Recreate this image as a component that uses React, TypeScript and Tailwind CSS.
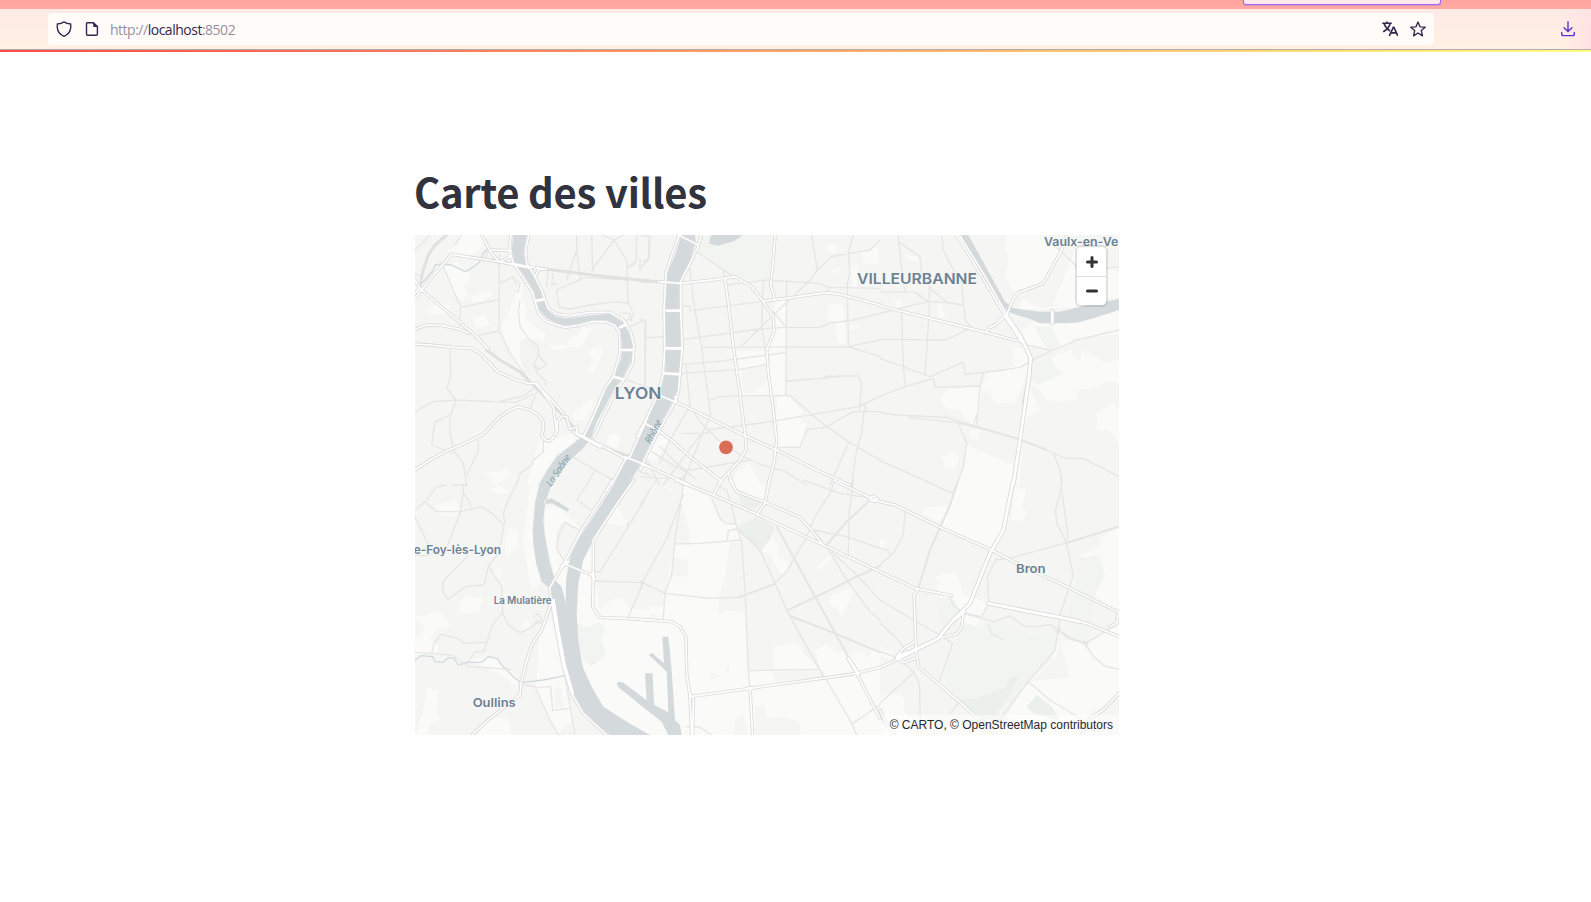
import React from "react";

type Tile = {
  x: number;
  y: number;
  light: string;
  grey: string;
  green: string;
  park: string;
  water: string;
  stream: string;
  minor: string;
  artery: string;
  rail: string;
  major: string;
  highway: string;
};

/* Map geometry, drawn at three units to the pixel and split in six sheets. */
const tiles: Tile[] = [
  {
    x: -15,
    y: -15,
    light:
      "M150 15L235 15L215 50L180 85L130 70L110 65L140 45ZM110 105L145 95L150 115L175 125L182 145L160 165L175 190L155 215L130 190L100 130ZM330 150L340 165L335 210L350 240L345 265L375 290L405 310L400 335L365 325L335 335L330 370L345 425L320 410L285 330L275 290L300 240L318 190ZM185 200L240 180L245 195L210 215L185 215ZM45 240L80 222L115 225L125 245L90 255L50 250ZM415 345L470 345L485 320L505 315L520 290L545 300L530 320L510 355L480 350L450 360L425 360ZM545 355L575 345L575 375L550 430L532 420L555 390L535 375ZM490 545L520 530L545 505L545 530L520 570L490 570ZM595 615L630 610L620 655L590 645ZM385 640L440 625L490 610L500 640L440 670L400 740L375 765L350 765ZM230 725L270 725L290 712L300 735L275 755L255 765L232 740ZM190 265L225 255L238 285L200 295Z",
    grey: "",
    green: "M330 335L350 325L385 345L382 385L370 400L375 425L345 430L330 380Z",
    park: "",
    water:
      "M310 15L305 60L315 100L345 140L370 180L380 215L388 240L410 265L440 280L465 287L500 282L540 272L590 272L615 282L628 300L636 340L634 385L615 435L590 475L565 530L550 570L525 615L500 632L440 680L410 722L395 750L388 765L424 765L430 750L480 690L520 655L545 622L558 580L590 520L615 475L640 440L665 390L668 345L655 305L635 275L600 252L550 255L500 262L465 265L435 258L412 240L400 205L390 170L370 140L350 105L340 70L350 15Z",
    stream: "M235 55L220 70L208 97L180 118L165 125L145 115L125 105L95 102L75 105L70 120L45 150L30 165",
    minor:
      "M100 110L125 170L152 230L148 285M152 232L268 208M268 95L268 303M268 160L310 140L318 165M268 303L210 315L195 330M268 303L300 370L350 440M320 150L330 160L325 185L318 185M330 215L325 240L330 290L355 325L385 350L385 375L372 405L385 418L410 405L385 375M372 405L382 430L410 455L405 465M120 360L122 440L110 475L138 510L120 560L120 610L130 660L160 700L170 765M15 545L70 515L138 510L210 513L245 515L320 517L370 492M120 555L75 575L65 645L130 670M205 630L205 665L170 735M275 513L340 498L378 470M380 485L360 535M400 635L400 665L370 690L365 705L330 730L320 765M500 15L500 60L510 145M545 15L548 120M612 30L560 100L545 125M612 30L650 90L655 220M575 15L612 30L640 15M500 60L470 150M680 15L678 95L665 110M650 115L675 95M440 180L525 142L655 150M440 180L447 232L480 237L540 225L620 215L655 220L672 255M640 280L672 255M660 290L705 270M630 250L660 250L665 275M705 270L705 465M15 60L40 35L60 15M15 130L30 140M235 55L225 90M250 400L252 425M270 75L265 95M490 682L555 720L605 748M555 720L530 765M720 735L690 725M130 765L170 765M135 45L155 15M415 120L410 170M430 130L425 165L440 160M640 445L720 475M720 15L718 85L700 95",
    artery: "",
    rail: "M30 170L38 125L55 75L75 45L110 15M390 115L470 125L590 140L720 153M230 360L270 390L330 425L370 465L410 505L490 590M560 645L660 680",
    major:
      "M15 205L75 130L125 73L235 90L310 103L410 118M215 15L245 70L268 97L300 80L303 62L245 60M15 150L30 175L15 190M30 175L100 235L165 290L200 320L235 358M15 298L50 285L100 287L150 298L175 310M15 342L60 345L130 352L185 355L210 370L240 400L262 425L320 450L355 460L380 460M380 460L400 490L430 530L435 570L440 605M375 460L415 500L460 550M15 720L60 690L110 663L175 635L220 612L270 560L300 540L325 530L360 540L385 555L400 575L400 600L395 615L405 630L420 633L432 620L442 600L442 575L455 558L470 560L475 580L480 598L500 590L502 610L490 605L540 630L600 660L645 685M303 15L298 60L310 100L340 145L367 185L377 220L385 250L410 275L465 292L510 285L550 275L590 275L615 287L628 305L630 370L610 440L585 475L560 535L540 580L520 620M356 15L347 60L350 100L375 140L395 180L405 210L415 235L440 252L480 257L540 247L600 247L640 270L662 305L672 350L668 400L645 445L610 500L575 570L550 625M375 140L385 120L400 117M720 542L705 580L660 680L645 690L605 765M645 680L720 710",
    highway: "M310 103L360 112M375 213L400 208M630 292L645 285M635 360L668 360M612 440L638 448M500 610L570 650",
  },
  {
    x: 675,
    y: -15,
    light:
      "M560 40L590 40L592 70L560 68ZM665 65L712 52L718 100L670 100ZM565 225L605 220L612 250L620 340L595 342L585 275L565 270ZM625 282L655 290L645 300L628 298ZM405 210L437 210L437 495L305 495L295 425L265 360L380 365L400 290ZM410 500L450 498L488 545L475 560L498 580L498 605L482 650L415 650L408 570ZM630 115L655 100L650 180L640 175ZM572 122L598 112L595 135ZM275 765L285 730L325 700L350 740L365 765ZM0 625L35 600L85 630L50 690L20 690L0 660Z",
    grey: "M305 415L378 410L380 455L345 485L325 485L320 445L345 450L340 490L305 490Z",
    green: "M185 30L210 15L405 15L392 155L340 150L280 140L260 120L175 62Z",
    park: "",
    water:
      "M125 15L105 75L82 130L76 240L78 350L75 430L60 490L20 570L-10 625L-40 690L-80 765L-35 765L0 705L50 600L90 530L112 480L120 430L122 350L120 240L122 150L150 90L168 35L165 15ZM208 30L215 15L308 15L285 32L235 47L210 42Z",
    stream: "",
    minor:
      "M170 65L280 140M148 105L160 210L185 355L212 555M130 228L150 228L150 242L365 215M130 328L360 297L435 292L540 292L565 280L640 270L720 250M185 352L625 350L720 380M625 350L720 330M625 345L622 160L630 130L625 65L640 15M440 150L438 455L437 495M515 15L532 120M510 150L532 120L575 80L660 65L690 60L720 30M510 150L300 352M400 245L437 290M370 155L365 290L378 370M260 165L380 150L535 160L565 172L720 175M565 172L565 190M0 85L0 125M0 15L28 20L25 90L0 115M0 270L18 272L15 465M20 323L72 320M130 403L230 395L437 368M125 430L300 418L375 405M138 403L150 530L180 575L235 630L300 675L365 705L430 722L500 765M440 453L550 445L600 438L655 438L665 460L658 540M550 445L560 438L600 440M450 497L500 540L560 590L625 635L720 690M205 512L240 500L300 497L450 497M200 600L390 575L655 530L720 500M498 598L555 592L640 545L720 545M415 652L480 652L500 600M655 530L672 520L680 545L655 545M672 540L665 610L650 660L635 765M625 640L570 765M210 555L140 730L125 765M145 535L90 630L60 700M210 605L180 615L70 765M125 610L180 610M130 723L330 690M35 665L105 710L140 722L130 745L60 745L0 740M60 650L110 700L165 745M20 690L60 765M250 120L255 145",
    artery: "",
    rail: "M0 152L80 156",
    major:
      "M115 15L175 45M185 15L170 60L145 110L122 155L122 240L127 350L120 430L115 490L95 535L55 605L20 675L0 720M118 15L95 75L78 130L72 240L74 350L70 430L55 490L15 575L-10 620M55 155L125 160L230 148L285 140L335 170L370 215L400 260L402 305L380 360L385 430L400 540L410 630L402 700L385 765M370 213L440 205L520 193L560 188L600 193L720 225M405 15L400 90L392 165L405 210M255 145L265 220L280 350L300 490L317 630L318 660L300 690L240 755M55 495L105 515L170 545L310 615L410 660L540 725L630 765M15 580L60 605L100 635L150 680L240 750M0 700L60 725L150 765M265 730L280 765M110 515L105 500",
    highway: "M80 242L122 242M78 355L125 355M75 430L120 433",
  },
  {
    x: 1395,
    y: -15,
    light:
      "M380 15L480 15L540 70L510 120L480 165L420 195L400 185L375 140L385 90L375 60ZM80 75L115 80L120 95L80 92ZM415 235L430 205L480 235L600 215L600 230L480 240ZM170 230L185 220L195 265L175 262ZM45 210L65 208L65 232L48 230ZM470 270L520 282L717 235L717 310L620 325L510 360L450 350L425 300ZM400 350L430 355L445 390L440 430L415 500L400 520L340 520L330 480L305 490L290 590L250 560L245 540L205 540L180 510L200 480L310 465L320 430L400 410ZM510 385L590 350L680 400L717 390L717 765L410 765L440 460L520 450ZM260 645L400 705L395 765L230 765L255 700ZM185 680L215 665L238 680L225 720L195 710ZM270 600L300 600L295 630L272 625ZM590 45L620 80L660 90L717 130L717 200L550 230L520 220L540 170Z",
    grey: "M570 340L590 320L610 345L600 390L580 380ZM440 560L480 540L440 460L470 470L500 510L540 515L590 510L595 475L630 480L683 455L717 460L717 540L700 515L650 550L650 600L665 600L690 600L717 640L717 765L420 765L425 640ZM560 640L580 600L590 645L620 640L640 610L650 650L600 655L620 685L565 680Z",
    green: "M465 290L515 290L540 345L510 360L485 330ZM455 410L510 380L525 410L552 430L470 465L460 440Z",
    park: "",
    water:
      "M240 15L265 15L375 215L400 235L480 245L540 245L600 230L717 207L717 240L640 265L590 278L540 280L480 280L445 265L395 250L375 235Z",
    stream: "",
    minor:
      "M0 185L105 187L145 215L200 218L250 225L258 275L275 290L240 310L195 330L0 328M55 15L60 75L75 185M55 35L120 80L125 130L155 180L205 220M185 15L190 60L215 110L245 160L250 225M148 175L148 240L135 435M65 240L68 370L75 470L0 498M0 250L60 235L145 215M0 385L150 440L250 397L255 433L370 420L420 412L450 395L515 362L590 330L717 300M75 470L160 445L165 472L300 468L310 430M300 468L290 590M0 547L50 555L200 562L280 588L420 628L500 660L555 685L610 685L717 740M85 562L230 578L290 592M230 570L260 640L250 710L230 765M280 585L290 555M520 670L540 720L547 765M0 692L165 765M440 345L510 360M520 40L600 120M650 120L717 110",
    artery: "M280 588L420 628L500 660",
    rail: "M440 470L430 520",
    major:
      "M0 228L150 265L320 308L400 330L415 332M560 15L545 60L490 160L415 188L400 205L380 255L345 285L325 295L318 308M230 15L300 130L375 258L425 330L452 380L450 430M238 15L310 130L385 262L425 322",
    highway: "M375 258L430 335L452 385L447 440L420 630L400 765M517 243L517 280M380 260L425 335",
  },
  {
    x: -15,
    y: 735,
    light:
      "M75 75L135 60L150 85L140 110L85 105ZM235 25L270 15L295 35L270 45ZM360 20L385 15L370 80L372 180L395 305L365 330L355 285L340 180ZM285 180L300 140L325 155L325 205L285 235ZM255 270L275 268L270 295L250 290ZM140 395L165 345L218 355L205 400L180 400ZM15 410L85 395L125 440L85 445L60 475L85 500L80 520L15 525L15 480L45 450ZM402 85L440 80L470 105L515 150L560 100L605 15L720 15L720 765L600 765L520 700L470 590L450 460L420 325L435 290L405 160ZM175 540L250 530L330 600L320 620L280 590L200 550ZM385 450L425 420L455 560L490 720L440 765L375 630L385 540ZM50 625L85 630L78 700L90 720L60 735L50 765L15 765L40 690ZM235 715L295 715L305 765L205 765ZM340 430L355 420L360 445L335 455Z",
    grey: "M620 75L660 15L720 15L720 390L660 385L630 350L590 370L570 390L555 300L555 180L580 130L655 135ZM440 150L465 125L510 150L465 235L445 215ZM435 620L455 620L460 685L435 685Z",
    green: "M500 430L535 445L565 425L585 445L575 480L590 520L545 560L520 540L505 480Z",
    park: "",
    water:
      "M395 0L388 15L375 70L368 150L370 190L378 250L395 305L420 325L432 370L445 450L465 560L490 640L530 710L600 765L720 765L655 728L580 680L545 620L518 560L505 480L500 400L505 310L520 240L550 180L600 100L660 15L665 0L620 0L560 95L510 170L480 230L468 300L467 370L455 320L435 300L420 250L405 170L400 120L405 75L410 55L430 0ZM402 62L425 55L478 86L473 95L425 70L405 72ZM620 610L627 605L640 608L720 668L720 697L625 622Z",
    stream: "M15 540L35 527L68 530L75 545L100 547L115 533L132 535L145 555L175 547L215 547L235 530L262 535L275 555L310 590L333 608L400 600L465 587",
    minor:
      "M15 90L45 65L80 20L110 15M45 65L80 95L150 95L215 80L245 100L282 135L270 200L262 225L235 258L275 320L278 400L295 435L330 458L370 440L380 420M325 0L295 60L280 100L285 130M160 15L160 40L150 100L115 190L95 230L60 205L15 110M160 40L180 65L182 85M235 258L222 315L165 320L115 358L100 340L98 305L175 225M15 225L50 228L80 215M275 400L245 440L222 515L195 515L180 540L145 555M65 520L72 490L92 463L145 475L160 490L228 487M15 517L65 520L130 527L175 560L300 568M380 425L395 430M372 410L385 400L395 420L380 430M340 615L375 620L420 720L445 765M380 622L422 620L428 692L480 685M465 590L480 680L495 765M515 155L465 127L445 165L440 205L460 240M500 60L545 90M500 60L530 15M550 275L570 275L655 140L720 30M655 140L650 130M555 303L700 308L720 320M700 308L655 410",
    artery: "",
    rail: "",
    major:
      "M185 765L240 715L330 645L333 610L348 550L365 495L395 450L425 365L418 325L460 255L515 150L600 15L605 0M425 365L440 450L460 560L485 640L520 700L590 765M672 0L625 65L550 180L550 285L548 380L570 412L640 415L720 420M465 252L550 287",
    highway: "M455 260L475 245M430 360L445 455L465 560L488 640M548 280L553 300",
  },
  {
    x: 675,
    y: 735,
    light:
      "M0 45L60 15L125 35L145 160L145 190L145 290L95 290L80 340L120 345L120 380L70 385L65 415L0 380ZM130 15L215 55L240 120L290 135L300 180L310 330L315 350L320 570L400 570L400 500L470 485L500 530L540 565L525 510L560 490L585 515L640 520L720 510L720 765L480 765L0 765L0 420L65 415L75 335L95 250L105 180L125 50ZM365 215L395 160L415 205L410 225L450 250L425 285L400 245L390 220ZM530 260L575 220L575 235L540 270ZM570 350L640 320L635 350L605 410L590 385L570 375ZM285 15L375 15L370 60L300 40ZM0 15L50 15L0 80Z",
    grey: "M0 80L50 15L125 40L120 50L150 160L145 190L105 190L75 335L70 380L0 375ZM270 185L300 180L315 350L235 352L255 290ZM235 350L315 350L315 395L255 390L250 402L235 400ZM315 400L330 350L480 485L400 500L400 570L320 570ZM280 765L285 715L310 700L325 765ZM345 765L345 680L375 678L375 715L425 710L480 725L482 765ZM212 580L228 580L228 598L212 598ZM254 557L266 557L266 575L256 575ZM95 235L145 240L145 290L95 290ZM400 575L555 570L550 595L405 605ZM675 480L692 485L692 532L675 532Z",
    green: "",
    park: "M295 45L370 62L345 88L305 78ZM288 142L350 112L405 138L390 180L360 215L325 180Z",
    water:
      "M67 470L85 470L95 570L105 720L120 735L125 765L85 765L65 725L-10 666L-10 645L20 664L15 580L38 580L42 675L85 697L80 575L27 525L35 518L72 550Z",
    stream: "",
    minor:
      "M0 75L50 0M0 330L8 305L80 175L130 45M0 303L75 340L210 355L300 352M75 340L95 285L105 180L125 50L130 12M105 192L180 190L300 180M230 15L260 30L275 80L290 140L305 190L315 330L320 450L328 620M215 55L240 115L255 130L285 132M290 147L265 152L262 180M75 340L70 415M290 147L330 180L365 220L405 310L440 390L540 570L560 600L635 730L650 765M405 310L440 275L465 230L495 180L525 110L570 40L585 0M640 0L628 90L625 225M520 150L620 170L720 205M695 55L600 40L490 0M560 200L620 300L690 395L720 420M575 215L650 285L720 360M520 150L550 190M330 572L535 568M440 390L450 410L550 590M638 730L720 675M140 740L180 742L215 765",
    artery: "M295 352L405 312M440 392L560 335L650 290L720 258M450 408L585 460L720 517M410 140L460 230L525 350L625 530M560 195L620 125L690 60",
    rail: "",
    major:
      "M105 0L220 45L350 102L550 195L720 275M220 45L245 0M270 0L290 35L375 67L480 112L510 145L550 195M388 0L375 70L350 105M580 0L700 58L720 65M690 55L698 48L712 56L705 65L690 60M0 418L95 425L120 440L138 470L140 580L150 650L155 765M150 650L330 625L640 582L720 562M330 622L338 765M625 535L650 580L720 715M160 655L158 765M150 640L160 655",
    highway: "M325 625L336 625M625 535L655 582",
  },
  {
    x: 1395,
    y: 735,
    light:
      "M230 15L400 0L370 150L335 210L185 145ZM405 20L440 30L425 80L440 100L425 125L395 120ZM125 85L200 75L200 105L175 125L130 105ZM160 290L230 275L250 345L320 365L290 445L240 425L180 355ZM600 220L640 190L717 140L717 390L640 360L675 285L660 225L605 235ZM530 480L610 490L640 530L717 560L717 640L620 710L600 765L340 765L445 605L515 540ZM0 175L20 180L15 205L0 210ZM0 650L30 640L70 650L75 700L100 720L110 765L0 765ZM0 500L45 520L30 540L0 525ZM560 480L620 490L717 435L717 565L640 545Z",
    grey: "M590 170L620 150L660 140L660 200L605 225ZM540 480L570 590L450 605L530 530ZM620 710L717 665L717 765L600 765ZM125 300L165 290L180 310L150 325Z",
    green: "M165 360L215 350L245 400L225 440L180 470L185 420ZM255 430L300 445L330 425L400 440L460 470L525 455L530 500L510 540L445 605L400 660L340 700L320 720L250 680L190 600L225 490L240 450ZM600 235L650 225L675 285L640 350L630 460L600 475L580 460L570 400L590 300Z",
    park: "M235 660L290 655L380 620L385 595L420 585L385 650L350 700L390 720L300 720L260 690ZM440 680L470 645L520 685L540 725L460 700Z",
    water: "",
    stream: "",
    minor:
      "M130 0L218 40L235 0M75 95L70 165L40 220L0 255M0 205L25 212L30 225M350 235L322 290L327 370L305 410L255 400M350 240L400 232L560 188L717 140M545 0L540 40L527 90L530 130L558 185L580 285L540 405L535 450L525 510L445 605L345 735M545 30L565 170L555 190M210 350L220 375L250 400L340 425L390 408L435 440L475 440L510 433L535 450L570 475L615 490L660 465L710 430M615 490L640 530L675 558L717 568M0 360L100 420L180 465L218 490L178 605M0 430L45 470L70 500M0 515L30 525L55 535L100 575L118 610L122 765M0 670L100 578M178 610L235 670L210 700M445 605L510 660L610 720M525 450L535 460L540 440M610 480L618 500L625 485M325 435L335 460L370 480",
    artery: "M235 0L210 75L150 210L115 325M555 190L717 140M535 450L570 475L615 490",
    rail: "",
    major:
      "M0 65L45 75L180 142L340 212L400 245L570 325L717 397M0 275L105 325L215 347M115 325L102 345L108 510L115 560L180 615L300 720L350 765M0 563L60 535L170 480L200 440L255 395M175 475L230 462L245 440L250 400M105 485L70 505L50 530L70 548L105 535M50 530L80 515M325 370L450 397L540 412L620 430L717 470M717 395L710 430L690 440M717 640L670 690L630 715L605 765M0 690L20 735L45 765",
    highway: "M400 0L370 150L330 220L270 370L220 420L175 475L50 535M325 370L540 412L600 425",
  },
];

function Layer({ layer, ...rest }: { layer: keyof Omit<Tile, "x" | "y"> } & React.SVGProps<SVGGElement>) {
  return (
    <g {...rest}>
      {tiles.map((t, i) => (
        <path key={i} d={t[layer]} transform={`translate(${t.x} ${t.y})`} />
      ))}
    </g>
  );
}

const line = { fill: "none", strokeLinejoin: "round" as const, strokeLinecap: "round" as const };

const labels = [
  { text: "LYON", x: 599, y: 492, size: 49, width: 140 },
  { text: "VILLEURBANNE", x: 1326, y: 148, size: 44, width: 360 },
  { text: "Vaulx-en-Ve", x: 1887, y: 34, size: 36, width: 223 },
  { text: "e-Foy-lès-Lyon", x: -4, y: 958, size: 37, width: 262 },
  { text: "La Mulatière", x: 236, y: 1107, size: 30, width: 174 },
  { text: "Oullins", x: 173, y: 1416, size: 37, width: 129 },
  { text: "Bron", x: 1803, y: 1013, size: 37, width: 89 },
];

function CityMap() {
  return (
    <svg className="block h-[500px] w-[704px]" viewBox="0 0 2112 1500">
      <rect width="2112" height="1500" fill="#f5f5f3" />
      <Layer layer="light" fill="#fafaf8" />
      <Layer layer="grey" fill="#f5f5f3" />
      <Layer layer="green" fill="#f1f4f1" />
      <Layer layer="park" fill="#ebf0ea" />
      <Layer layer="water" fill="#d4dadc" />
      <Layer layer="stream" {...line} stroke="#d0dade" strokeWidth="4" />
      <Layer layer="minor" {...line} stroke="#e6e6e5" strokeWidth="4" />
      <Layer layer="artery" {...line} stroke="#e5e5e4" strokeWidth="6" />
      <Layer layer="rail" {...line} stroke="#e1e1e1" strokeWidth="9" />
      <Layer layer="major" {...line} stroke="#dadadb" strokeWidth="10" />
      <Layer layer="highway" {...line} stroke="#dadadb" strokeWidth="13" />
      <Layer layer="major" {...line} stroke="#ffffff" strokeWidth="5" />
      <Layer layer="highway" {...line} stroke="#ffffff" strokeWidth="8" />
      <g
        fill="#6b8193"
        stroke="#f8f8f7"
        strokeWidth="5"
        strokeLinejoin="round"
        paintOrder="stroke"
        fontFamily="Inter, sans-serif"
        fontWeight="600"
      >
        {labels.map((l) => (
          <text key={l.text} x={l.x} y={l.y} fontSize={l.size} textLength={l.width} lengthAdjust="spacingAndGlyphs">
            {l.text}
          </text>
        ))}
      </g>
      <g fill="#83a0a8" fontFamily="'Open Sans', sans-serif" fontStyle="italic" fontSize="29">
        <text transform="translate(408 756) rotate(-56)" textLength="108">La Saône</text>
        <text transform="translate(706 628) rotate(-62)" textLength="77">Rhône</text>
      </g>
      <circle cx="933" cy="637" r="20.5" fill="#da6d58" />
    </svg>
  );
}

function AddressBar() {
  return (
    <div className="flex h-8 w-[1386px] items-center rounded bg-[#fffbf8] pr-2 pl-2 text-[#32264d]">
      <svg className="size-4" viewBox="0 0 16 16" fill="none" stroke="currentColor" strokeWidth="1.35" strokeLinejoin="round">
        <path d="M8 .9C6 2.4 3.7 2.9 1.3 3V6.6C1.6 11 4.2 13.7 8 15.3C11.8 13.7 14.4 11 14.7 6.6V3C12.3 2.9 10 2.4 8 .9Z" />
      </svg>
      <svg className="ml-3 size-4" viewBox="0 0 16 16" fill="none" stroke="currentColor" strokeWidth="1.4" strokeLinejoin="round">
        <path d="M9.5 1.7H3.6Q2.5 1.7 2.5 2.8V13Q2.5 14.2 3.6 14.2H12.3Q13.4 14.2 13.4 13V5.6Z" />
        <path d="M9.2 1.3L13.8 5.9H10.2Q9.2 5.9 9.2 4.9Z" fill="currentColor" stroke="none" />
      </svg>
      <div className="ml-[10px] pt-[2px] font-['Open_Sans',sans-serif] text-[14px] leading-5 tracking-[-0.49px] whitespace-nowrap text-[#978fa3]">
        http://<span className="text-[#32264d]">localhost</span>:8502
      </div>
      <svg className="ml-auto size-4" viewBox="0 0 16 16" fill="none" stroke="currentColor" strokeWidth="1.6">
        <path d="M.3 2.2H9.8M5 .5V2.2M2 2.5C3 5.3 5 8 8 10M8.2 2.5C7.3 5.8 4.8 8.8 1.2 10.8" />
        <path d="M7.3 14.8L11.3 6.3H11.9L15.8 14.8M8.6 11.9H14.5" />
      </svg>
      <svg className="ml-3 size-4" viewBox="0 0 16 16" fill="none" stroke="currentColor" strokeWidth="1.35" strokeLinejoin="round">
        <path d="M8 1L10 5.8L15.2 6.2L11.3 9.6L12.5 14.9L8 12L3.5 14.9L4.7 9.6L.8 6.2L6 5.8Z" />
      </svg>
    </div>
  );
}

export default function App() {
  return (
    <div className="flex h-[902px] w-[1591px] flex-col overflow-hidden bg-white">
      <header className="flex flex-col">
        <div className="flex h-[9px] justify-end bg-[linear-gradient(75deg,transparent_1574px,#ff7f88_1575px,#ff6878_1591px),linear-gradient(#ffa3a1,#ffaaa2)] pr-[150px]">
          <div className="h-[5px] w-[198px] rounded-b-[3px] border border-t-0 border-[#9b68f5] bg-[#ffe9e8] shadow-[0_1px_1px_#c080d080]" />
        </div>
        <div className="flex h-10 items-center bg-[linear-gradient(90deg,transparent_1560px,#ffe3e3_1591px),linear-gradient(#ffeae6,#fff1e3)] pr-[15px] pl-12">
          <AddressBar />
          <svg className="ml-auto size-4" viewBox="0 0 16 16" fill="none" stroke="#5b32cf" strokeWidth="1.4" strokeLinecap="round" strokeLinejoin="round">
            <path d="M8 .8V10.3M4 6.7L8 10.6L12 6.7M1.7 11.5V12.7Q1.7 14.6 3.5 14.6H12.5Q14.3 14.6 14.3 12.7V11.5" />
          </svg>
        </div>
        <div className="h-px bg-[#b5aba9]" />
        <div className="h-0.5 bg-[linear-gradient(90deg,#ff4b4b,#fffd80)]" />
      </header>
      <main className="flex flex-col pt-[110px] pl-[415px]">
        <h1 className="-ml-px h-[73px] font-['Noto_Sans_CJK_SC',sans-serif] text-[40px] leading-[58px] font-bold tracking-[-0.27px] whitespace-nowrap text-[#31333f]">
          Carte des villes
        </h1>
        <section className="relative h-[500px] w-[704px] overflow-hidden">
          <CityMap />
          <div className="absolute top-3 right-[13px] flex w-[29px] flex-col rounded bg-white text-[#333] shadow-[0_0_0_2px_rgba(0,0,0,0.1)]">
            <button className="flex h-[30px] items-center justify-center border-b border-[#ddd]" aria-label="Zoom in">
              <svg className="size-3" viewBox="0 0 12 12" stroke="currentColor" strokeWidth="3" strokeLinecap="round">
                <path d="M6 1.5V10.5M1.5 6H10.5" />
              </svg>
            </button>
            <button className="flex h-7 items-center justify-center" aria-label="Zoom out">
              <svg className="size-3" viewBox="0 0 12 12" stroke="currentColor" strokeWidth="3" strokeLinecap="round">
                <path d="M1.5 6H10.5" />
              </svg>
            </button>
          </div>
          <div className="absolute right-0 bottom-0 bg-white/50 px-[6px] font-['Liberation_Sans',sans-serif] text-xs leading-5 whitespace-nowrap text-[#262730]">
            © CARTO, © OpenStreetMap contributors
          </div>
        </section>
      </main>
    </div>
  );
}
